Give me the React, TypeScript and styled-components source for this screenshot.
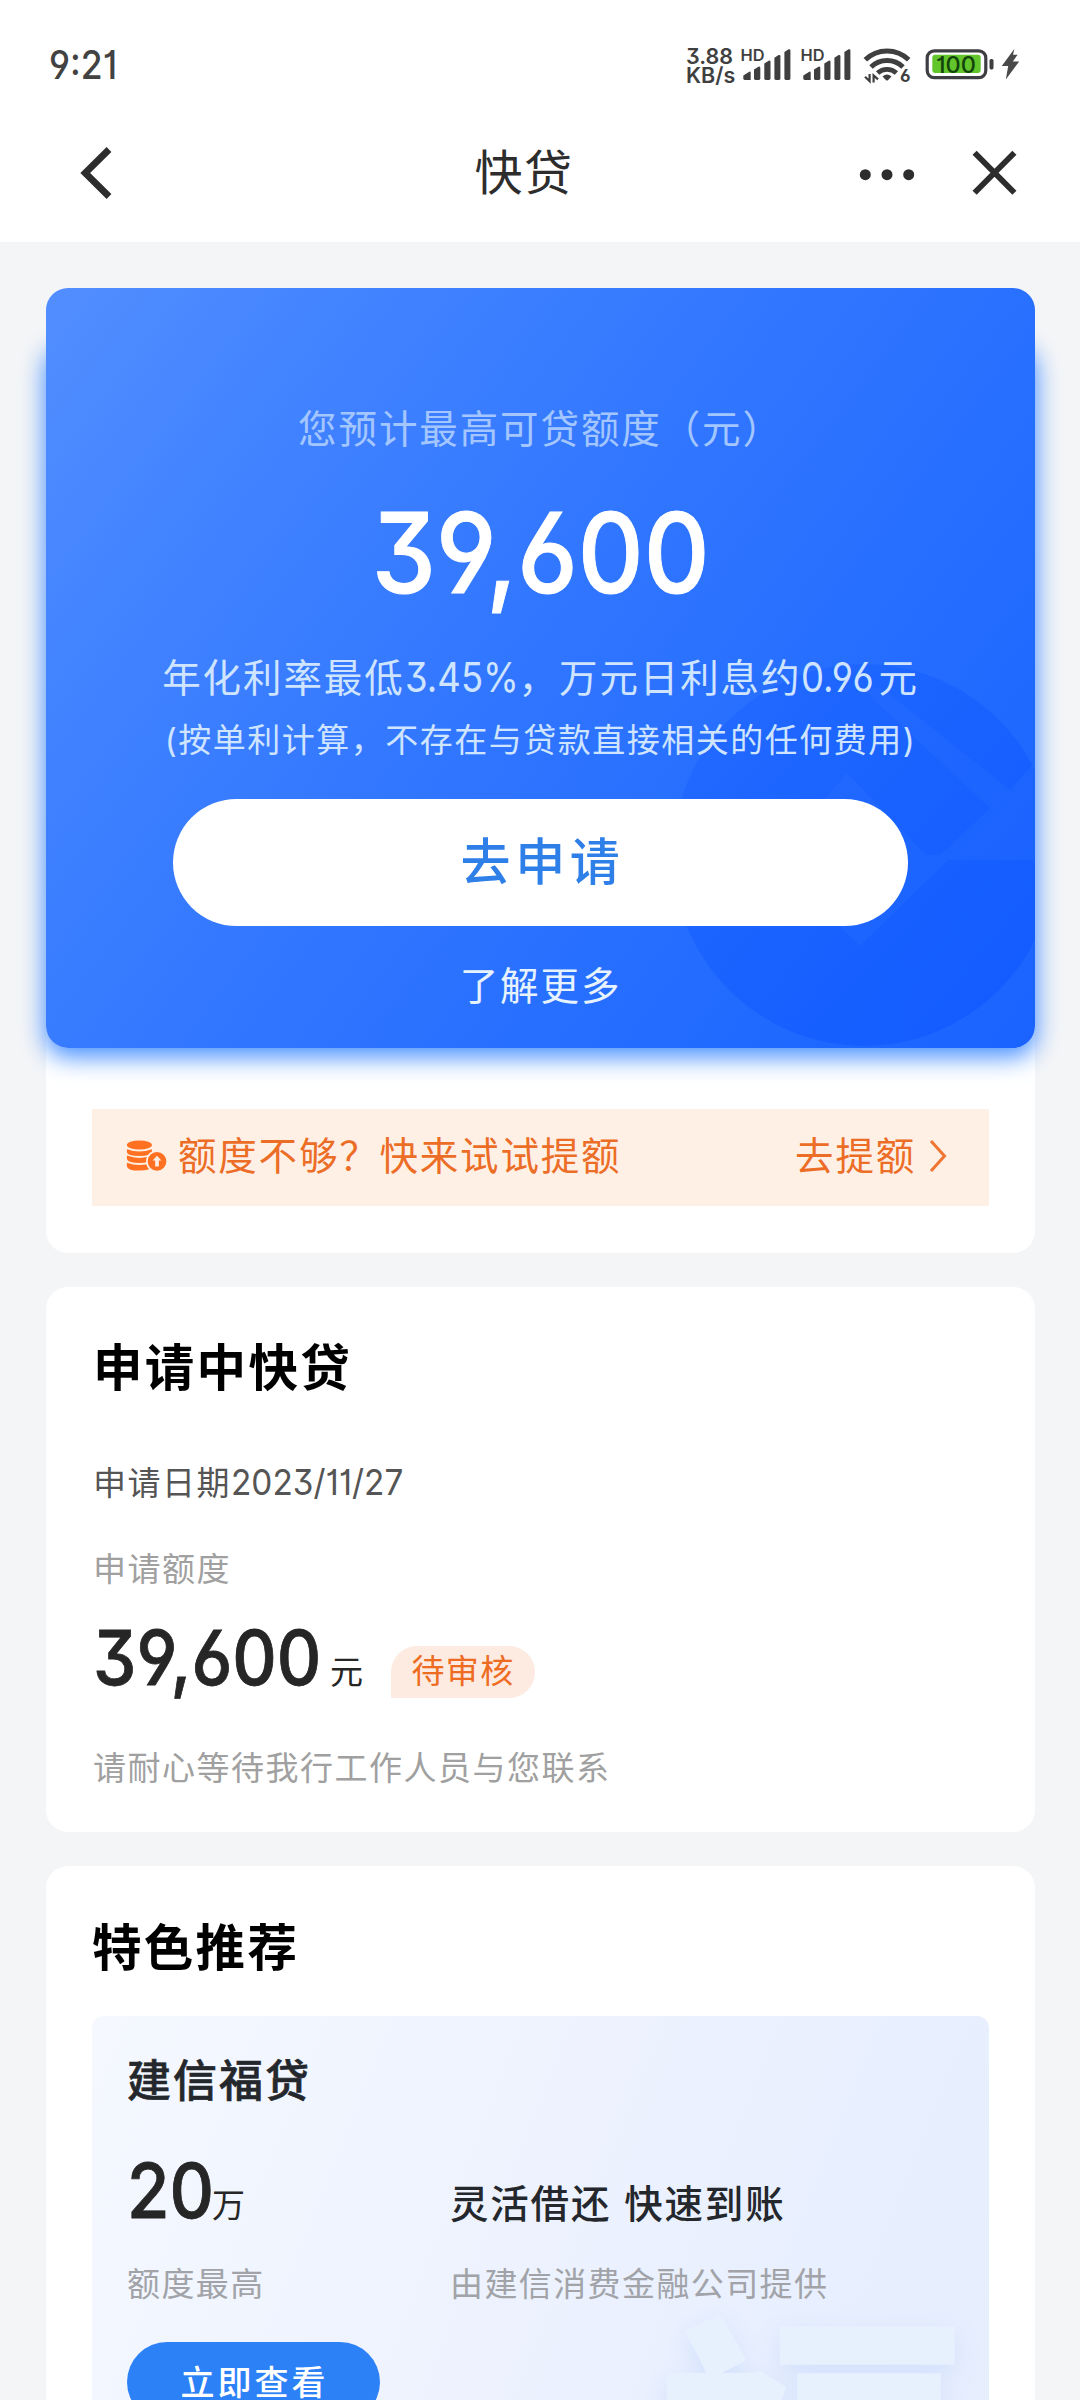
import React from 'react';
import styled, { createGlobalStyle } from 'styled-components';

const GlobalStyle = createGlobalStyle`
  *, *::before, *::after { box-sizing: border-box; }
  body {
    margin: 0;
    background: #f4f5f7;
    font-family: Inter, "Noto Sans CJK SC", sans-serif;
    font-feature-settings: "cv01", "cv03", "cv04", "cv09";
  }
`;

const Page = styled.div`
  width: 1080px;
  height: 2400px;
  overflow: hidden;
  display: flex;
  flex-direction: column;
  background: #f4f5f7;
`;

const Header = styled.header`
  flex: none;
  height: 242px;
  background: #fff;
`;

const StatusBar = styled.div`
  display: flex;
  justify-content: space-between;
  height: 104px;
  padding: 40px 56px 0 49px;
`;

const Clock = styled.span`
  height: 48px;
  line-height: 49px;
  font-size: 39px;
  font-weight: 500;
  color: #424242;
  transform: scaleX(0.91);
  transform-origin: left;
`;

const StatusRight = styled.div`
  display: flex;
  gap: 6px;
`;

const Speed = styled.div`
  display: flex;
  flex-direction: column;
  width: 48px;
  padding-top: 7px;
  font-size: 21.5px;
  font-weight: 600;
  line-height: 18.5px;
  color: #3f3f3f;
  white-space: nowrap;
`;

const WifiSlot = styled.div`
  margin: 0 5px 0 3px;
`;

const NavBar = styled.nav`
  display: flex;
  align-items: center;
  height: 138px;
  padding: 0 62px 0 76px;
`;

const NavTitle = styled.h1`
  flex: 1;
  margin: 0 0 0 74px;
  text-align: center;
  font-size: 48px;
  font-weight: 400;
  line-height: 60px;
  letter-spacing: 1.5px;
  color: #2d2d2d;
`;

const NavIcons = styled.div`
  display: flex;
  gap: 50px;
  align-items: center;
`;

const Main = styled.main`
  flex: none;
  display: flex;
  flex-direction: column;
  gap: 34px;
  padding: 46px 45px 0 46px;
`;

const Card = styled.section`
  background: #fff;
  border-radius: 22px;
`;

const OfferCard = styled(Card)`
  height: 965px;
`;

const Hero = styled.div`
  position: relative;
  isolation: isolate;
  height: 760px;

  &::before {
    content: '';
    position: absolute;
    z-index: -2;
    inset: 52px 0 0 0;
    border-radius: 22px;
    box-shadow: 0 8px 24px 1px #458fff;
  }
`;

const HeroArt = styled.div`
  position: absolute;
  inset: 0;
  z-index: -1;
  overflow: hidden;
  border-radius: 22px;
  background: linear-gradient(127deg, #528eff 0%, #4283ff 20%, #2f75ff 50%, #226bff 78%, #1a63ff 100%);
  svg { display: block; }
`;

const HeroBody = styled.div`
  display: flex;
  flex-direction: column;
  align-items: center;
  padding-top: 117px;
  white-space: nowrap;
`;

const HeroLabel = styled.div`
  height: 48px;
  line-height: 48px;
  font-size: 38.5px;
  letter-spacing: 1.9px;
  color: #a3c6ff;
`;

const HeroAmount = styled.div`
  height: 120px;
  margin-top: 40px;
  line-height: 120px;
  font-size: 111px;
  font-weight: 500;
  color: #fff;
  -webkit-text-stroke: 1px #fff;
  transform: scaleX(0.92);
`;

const HeroRate = styled.div`
  height: 48px;
  margin-top: 40px;
  line-height: 48px;
  font-size: 38.5px;
  letter-spacing: 1.9px;
  color: #cfe4ff;
`;

const Num = styled.span<{ $width: number; $size: number; $scale: number }>`
  display: inline-block;
  width: ${p => p.$width}px;
  font-size: ${p => p.$size}px;
  letter-spacing: 0;
  transform: scaleX(${p => p.$scale});
  transform-origin: left;
`;

const HeroNote = styled.div`
  height: 40px;
  margin-top: 19px;
  line-height: 40px;
  font-size: 33px;
  letter-spacing: 1.5px;
  color: #cfe4ff;
`;

const ApplyButton = styled.button`
  width: 735px;
  height: 127px;
  margin-top: 39px;
  padding: 0 0 9px 4px;
  border: 0;
  border-radius: 64px;
  background: #fff;
  font: inherit;
  font-size: 50px;
  font-weight: 500;
  letter-spacing: 4.6px;
  color: #2f7fe8;
`;

const MoreLink = styled.a`
  height: 48px;
  margin-top: 36px;
  line-height: 48px;
  font-size: 38.5px;
  letter-spacing: 1.9px;
  color: #e6f3ff;
`;

const RaiseBar = styled.div`
  display: flex;
  align-items: center;
  height: 97px;
  margin: 61px 46px 0;
  padding: 0 42px 4px 33px;
  background: #fff0e6;
  font-size: 38.5px;
  letter-spacing: 1.8px;
  line-height: 48px;
  color: #ec6d26;
  white-space: nowrap;
`;

const RaiseText = styled.span`
  flex: 1;
  margin-left: 11px;
`;

const RaiseAction = styled.span`
  margin-right: 13px;
`;

const ApplyCard = styled(Card)`
  height: 545px;
  padding: 51px 48px 0 47px;
`;

const SectionTitle = styled.h2`
  margin: 0;
  height: 60px;
  line-height: 60px;
  font-size: 49.5px;
  font-weight: 700;
  letter-spacing: 2.3px;
  color: #000;
`;

const Line = styled.div<{ $top: number; $color: string }>`
  height: 40px;
  margin-top: ${p => p.$top}px;
  line-height: 40px;
  font-size: 33px;
  letter-spacing: 1.5px;
  color: ${p => p.$color};
  white-space: nowrap;
`;

const AmountRow = styled.div`
  display: flex;
  align-items: baseline;
  height: 80px;
  margin-top: 29px;
  line-height: 80px;
`;

const Amount = styled.span<{ $width: number }>`
  width: ${p => p.$width}px;
  font-size: 75px;
  font-weight: 500;
  color: #262626;
  -webkit-text-stroke: 0.8px #262626;
  white-space: nowrap;
  transform: scaleX(0.92);
  transform-origin: left;
`;

const Unit = styled.span`
  position: relative;
  top: -1px;
  font-size: 33px;
  color: #262626;
`;

const Badge = styled.span`
  align-self: flex-start;
  width: 144px;
  height: 52px;
  margin: 28px 0 0 28px;
  border-radius: 26px 26px 26px 0;
  background: #fdeae0;
  text-align: center;
  font-size: 33px;
  letter-spacing: 1.3px;
  line-height: 50px;
  color: #ee6c22;
`;

const FeatureCard = styled(Card)`
  height: 700px;
  padding: 52px 46px 0;
`;

const Product = styled.div`
  position: relative;
  isolation: isolate;
  height: 500px;
  margin-top: 38px;
  padding: 41px 36px 0 35px;
  overflow: hidden;
  border-radius: 12px;
  background: linear-gradient(112deg, #f5f8ff 0%, #eef3fe 40%, #e8effe 75%, #e6edfd 100%);
`;

const Watermark = styled.span`
  position: absolute;
  z-index: -1;
  left: 560px;
  top: 292px;
  line-height: 300px;
  font-family: "Noto Sans CJK SC", sans-serif;
  font-size: 318px;
  font-weight: 900;
  line-height: 280px;
  color: #e7f1fe;
  text-shadow: 0 8px 24px #d3e1fc;
`;

const ProductName = styled.h3`
  margin: 0;
  height: 48px;
  line-height: 48px;
  font-size: 44px;
  font-weight: 500;
  letter-spacing: 2px;
  color: #24272c;
  -webkit-text-stroke: 0.6px #24272c;
`;

const ProductGrid = styled.div`
  display: grid;
  grid-template-columns: 323px 1fr;
  grid-template-rows: 80px 40px;
  row-gap: 33px;
  margin-top: 46px;
  align-items: baseline;
  white-space: nowrap;
`;

const Quota = styled.div`
  display: flex;
  align-items: baseline;
  height: 80px;
  line-height: 80px;
`;

const Slogan = styled.div`
  font-size: 38.5px;
  font-weight: 500;
  letter-spacing: 1.8px;
  word-spacing: 1px;
  color: #24272c;
`;

const Caption = styled.div`
  line-height: 40px;
  font-size: 33px;
  letter-spacing: 1.4px;
  color: #a1a3a8;
`;

const ViewButton = styled.button`
  width: 253px;
  height: 80px;
  margin-top: 38px;
  padding: 0 0 4px 2px;
  border: 0;
  border-radius: 40px;
  background: #2d81f7;
  font: inherit;
  font-size: 34px;
  font-weight: 500;
  letter-spacing: 3px;
  color: #fff;
`;

const Signal = () => (
  <svg width="54" height="48" viewBox="740 40 54 48" fill="#3f3f3f">
    <text x="740.5" y="60.6" fontSize="16" fontWeight="600" textLength="24" lengthAdjust="spacingAndGlyphs">HD</text>
    <path d="M743.3 75.5l6-3.8q1.4-.5 1.4 1V80h-6q-1.4 0-1.4-1.4z" />
    <path d="M754 69.5l4.5-2.8q1.8-.5 1.8 1.2v10.7q0 1.4-1.4 1.4h-3.5q-1.4 0-1.4-1.4z" />
    <path d="M764.3 63.5l4.4-2.8q1.8-.5 1.8 1.2v16.7q0 1.4-1.4 1.4h-3.4q-1.4 0-1.4-1.4z" />
    <path d="M774.4 57.8l4.2-2.8q1.8-.5 1.8 1.2v22.4q0 1.4-1.4 1.4h-3.2q-1.4 0-1.4-1.4z" />
    <path d="M784.4 52.1l4.2-2.8q1.8-.5 1.8 1.2v28.1q0 1.4-1.4 1.4h-3.2q-1.4 0-1.4-1.4z" />
  </svg>
);

const Wifi = () => (
  <svg width="50" height="48" viewBox="863 40 50 48" fill="none" stroke="#3f3f3f">
    <path d="M865.3 59.8a31 31 0 0 1 43.4 0" strokeWidth="5" />
    <path d="M871 67a23 23 0 0 1 32 0" strokeWidth="5" />
    <path d="M877.6 73a13.8 13.8 0 0 1 18.8 0" strokeWidth="4.8" />
    <path d="M882.5 76.6q4.5-4.4 9 0l-3.6 3.6q-.9.8-1.8 0z" fill="#3f3f3f" stroke="none" />
    <path d="M869.6 74v7.2l-4.6-4.4M873.6 82.4v-7l4.4 4" strokeWidth="2.2" />
    <text x="900" y="82.4" fontSize="17" fontWeight="700" fill="#3f3f3f" stroke="none" textLength="10.5" lengthAdjust="spacingAndGlyphs">6</text>
  </svg>
);

const Battery = () => (
  <svg width="100" height="48" viewBox="924 40 100 48">
    <rect x="927.2" y="50.8" width="58.6" height="26.8" rx="7" fill="none" stroke="#3f3f43" strokeWidth="3.2" />
    <rect x="932.3" y="54.8" width="48.4" height="18.2" rx="3" fill="#62c52b" />
    <rect x="989.5" y="59" width="4" height="10.4" rx="1.6" fill="#3f3f3f" />
    <text x="936" y="72.5" fontSize="23" fontWeight="500" fill="#12430a" textLength="40" lengthAdjust="spacingAndGlyphs">100</text>
    <path d="M1014.4 48.8l-12.6 17.2h6.4l-2.4 13.4 13.4-18h-6.4l4.8-6.6h-4.6z" fill="#4a4a4a" />
  </svg>
);

const BackIcon = () => (
  <svg width="40" height="56" viewBox="76 145 40 56" fill="none" stroke="#2d2d2d" strokeWidth="6.8">
    <path d="M109 149.5L85.2 173l23.8 23.5" />
  </svg>
);

const MoreIcon = () => (
  <svg width="60" height="56" viewBox="858 145 60 56" fill="#2d2d2d">
    {[865.3, 887, 908.7].map(cx => <circle key={cx} cx={cx} cy="174.7" r="5.5" />)}
  </svg>
);

const CloseIcon = () => (
  <svg width="50" height="56" viewBox="968 145 50 56" stroke="#2d2d2d" strokeWidth="5.8">
    <path d="M974.6 152.8l39.8 40M1014.4 152.8l-39.8 40" />
  </svg>
);

const BankMark = () => (
  <svg width="989" height="760" viewBox="46 288 989 760">
    <defs>
      <linearGradient id="disc" x1="0" y1="0" x2="1" y2="1">
        <stop offset="0" stopColor="#0d55ff" stopOpacity="0.22" />
        <stop offset="1" stopColor="#0d55ff" stopOpacity="0.6" />
      </linearGradient>
    </defs>
    <circle cx="864" cy="855" r="191" fill="url(#disc)" />
    <path d="M862 688L882 688L1010 790L1035 762V860H948L860 946L770 860L847 773L926 855H940L990 808L872 698Z" fill="#2f74ff" opacity="0.26" />
  </svg>
);

const CoinsIcon = () => (
  <svg width="42" height="34" viewBox="125 1140 42 34">
    <g fill="#ff7020">
      <ellipse cx="139.4" cy="1146" rx="12.5" ry="4.6" />
      <path d="M126.9 1150.2q12.5 4.6 25 0v2.4q0 4.4-12.5 4.4t-12.5-4z" />
      <path d="M126.9 1156.6q12.5 4.8 25 0v3q-1 4.4-12.5 4.4t-12.5-4z" />
      <path d="M126.9 1163.8q12.5 4.6 25 0v3.2q-1 4.6-12.5 4.6t-12.5-4.2z" />
    </g>
    <circle cx="157" cy="1162.4" r="11" fill="#fff0e6" />
    <circle cx="157" cy="1162.4" r="9.3" fill="#ff7020" />
    <path d="M157 1156.8l4.4 4.8h-2.6v5.8h-3.6v-5.8h-2.6z" fill="#fff0e6" />
  </svg>
);

const ChevronRight = () => (
  <svg width="18" height="34" viewBox="929 1139 18 34" fill="none" stroke="#f07432" strokeWidth="3">
    <path d="M931 1141l13.5 15-13.5 15" />
  </svg>
);

export default function App() {
  return (
    <Page>
      <GlobalStyle />
      <Header>
        <StatusBar>
          <Clock>9:21</Clock>
          <StatusRight>
            <Speed><span>3.88</span><span>KB/s</span></Speed>
            <Signal />
            <Signal />
            <WifiSlot><Wifi /></WifiSlot>
            <Battery />
          </StatusRight>
        </StatusBar>
        <NavBar>
          <BackIcon />
          <NavTitle>快贷</NavTitle>
          <NavIcons>
            <MoreIcon />
            <CloseIcon />
          </NavIcons>
        </NavBar>
      </Header>
      <Main>
        <OfferCard>
          <Hero>
            <HeroArt><BankMark /></HeroArt>
            <HeroBody>
              <HeroLabel>您预计最高可贷额度（元）</HeroLabel>
              <HeroAmount>39,600</HeroAmount>
              <HeroRate>
                年化利率最低<Num $width={114} $size={41} $scale={0.89}>3.45%</Num>，万元日利息约<Num $width={77} $size={41} $scale={0.89}>0.96</Num>元
              </HeroRate>
              <HeroNote>(按单利计算，不存在与贷款直接相关的任何费用)</HeroNote>
              <ApplyButton>去申请</ApplyButton>
              <MoreLink>了解更多</MoreLink>
            </HeroBody>
          </Hero>
          <RaiseBar>
            <CoinsIcon />
            <RaiseText>额度不够？快来试试提额</RaiseText>
            <RaiseAction>去提额</RaiseAction>
            <ChevronRight />
          </RaiseBar>
        </OfferCard>

        <ApplyCard>
          <SectionTitle>申请中快贷</SectionTitle>
          <Line $top={65} $color="#555">申请日期<Num $width={172} $size={35.5} $scale={0.94}>2023/11/27</Num></Line>
          <Line $top={46} $color="#a0a0a0">申请额度</Line>
          <AmountRow>
            <Amount $width={237}>39,600</Amount>
            <Unit>元</Unit>
            <Badge>待审核</Badge>
          </AmountRow>
          <Line $top={50} $color="#a0a0a0">请耐心等待我行工作人员与您联系</Line>
        </ApplyCard>

        <FeatureCard>
          <SectionTitle>特色推荐</SectionTitle>
          <Product>
            <Watermark aria-hidden>福</Watermark>
            <ProductName>建信福贷</ProductName>
            <ProductGrid>
              <Quota>
                <Amount $width={85}>20</Amount>
                <Unit>万</Unit>
              </Quota>
              <Slogan>灵活借还 快速到账</Slogan>
              <Caption>额度最高</Caption>
              <Caption>由建信消费金融公司提供</Caption>
            </ProductGrid>
            <ViewButton>立即查看</ViewButton>
          </Product>
        </FeatureCard>
      </Main>
    </Page>
  );
}
